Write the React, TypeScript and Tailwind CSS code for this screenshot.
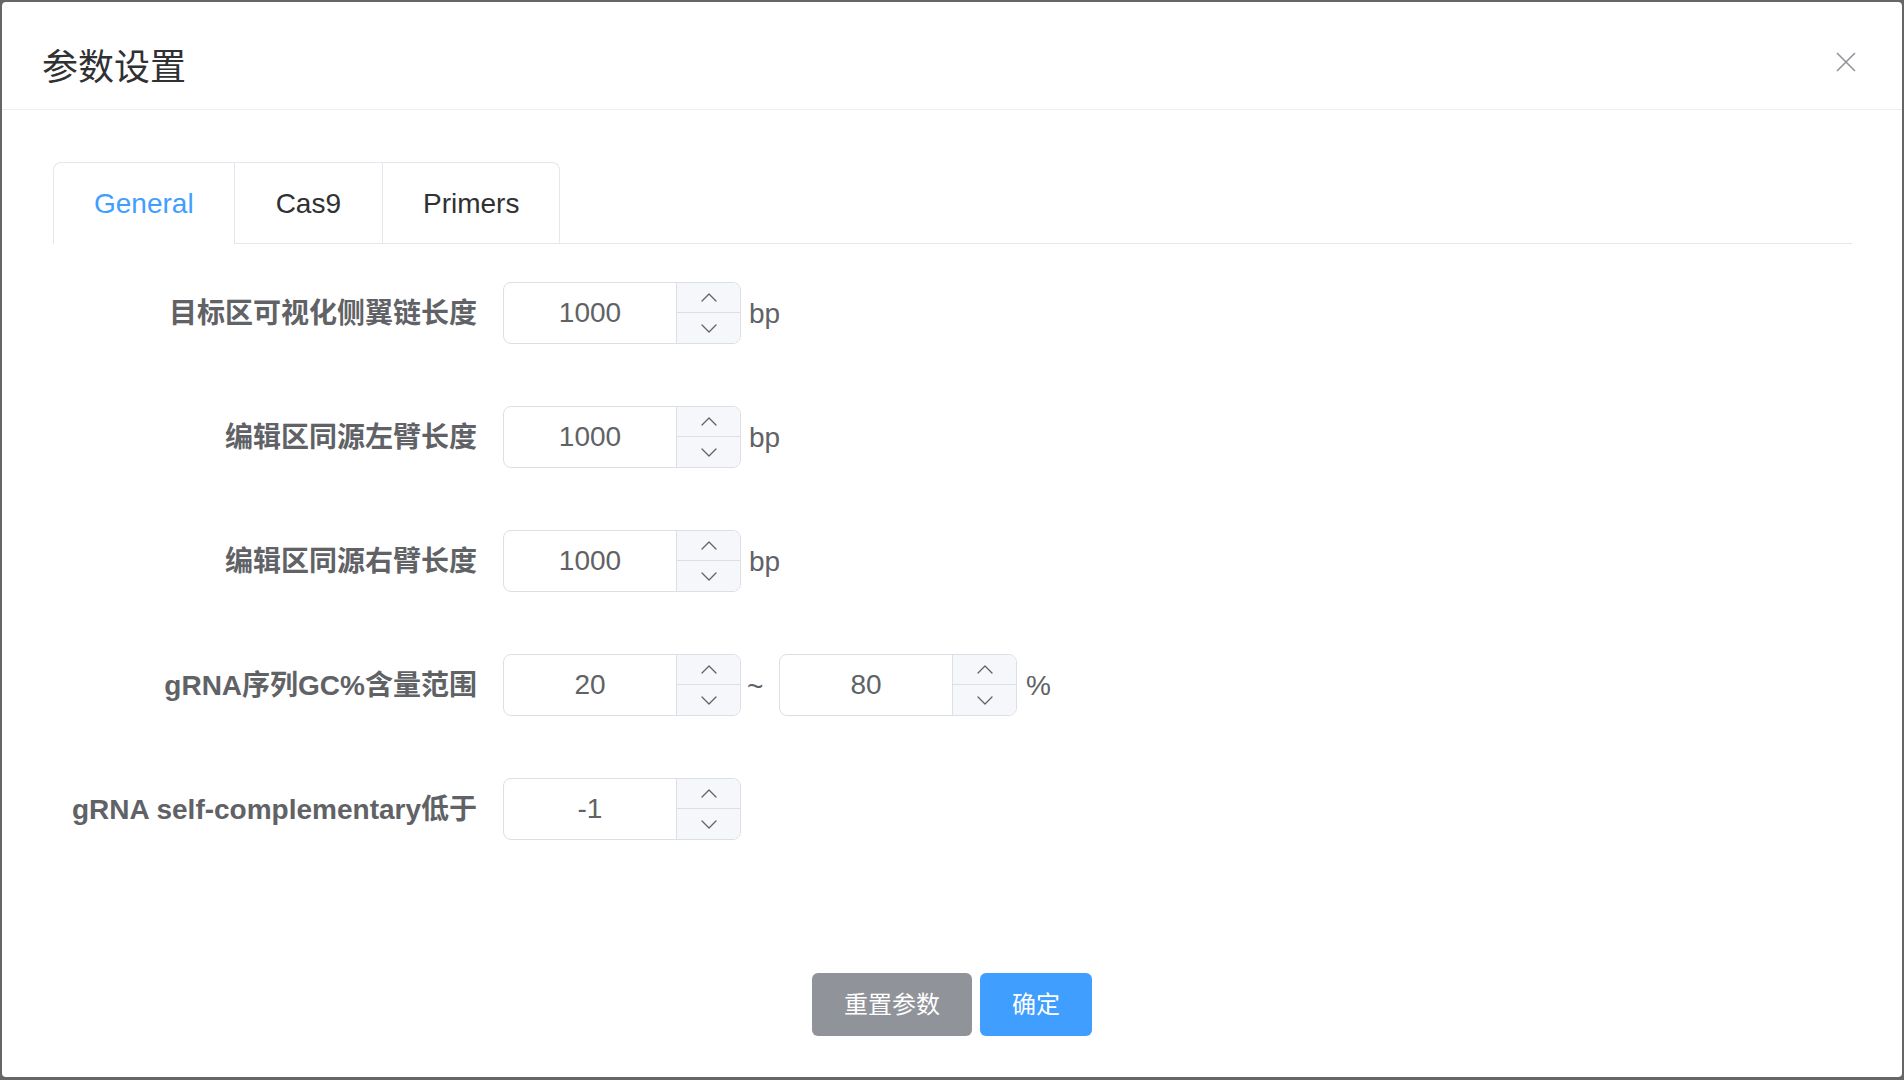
import { useState } from 'react';

const FONT = { fontFamily: '"Liberation Sans", "Noto Sans CJK SC", sans-serif' };

function Chevron({ up }: { up?: boolean }) {
  return (
    <svg width="16" height="9" viewBox="0 0 16 9" fill="none">
      <polyline
        points={up ? '1,8 8,1 15,8' : '1,1 8,8 15,1'}
        stroke="#606266"
        strokeWidth="1.3"
        strokeLinecap="round"
        strokeLinejoin="round"
      />
    </svg>
  );
}

function NumberInput({ value }: { value: string }) {
  return (
    <div className="flex w-[238px] h-[62px] border border-[#dcdfe6] rounded-[8px] bg-white overflow-hidden">
      <div className="flex-1 flex items-center justify-center text-[28px] text-[#606266]">{value}</div>
      <div className="w-[64px] flex flex-col border-l border-[#dcdfe6] bg-[#f5f7fa]">
        <div className="h-[30px] flex items-center justify-center border-b border-[#dcdfe6]">
          <Chevron up />
        </div>
        <div className="flex-1 flex items-center justify-center">
          <Chevron />
        </div>
      </div>
    </div>
  );
}

function Row({ label, children }: { label: string; children: React.ReactNode }) {
  return (
    <div className="flex items-center h-[62px]">
      <div className="w-[450px] pr-[26px] pt-[2px] text-right text-[28px] font-bold text-[#606266] whitespace-nowrap">
        {label}
      </div>
      {children}
    </div>
  );
}

const Unit = ({ children }: { children: React.ReactNode }) => (
  <span className="ml-[8px] pt-[2px] text-[28px] text-[#606266]">{children}</span>
);

const tabs = [
  { name: 'General', pad: 'px-10' },
  { name: 'Cas9', pad: 'px-[41px]' },
  { name: 'Primers', pad: 'px-10' },
];

export default function App() {
  const [tab, setTab] = useState('General');

  return (
    <div className="w-[1904px] h-[1080px] overflow-hidden bg-[#666666] pt-[2px] pl-[2px]" style={FONT}>
      <div className="relative w-[1900px] h-[1075px] bg-white rounded-[4px] flex flex-col">
        <div className="h-[108px] border-b border-[#ebeef5] pt-[42px] pl-[40px]">
          <h1 className="text-[36px] leading-[48px] text-[#303133]">参数设置</h1>
        </div>
        <button className="absolute right-[46px] top-[50px] w-[20px] h-[20px]">
          <svg width="20" height="20" viewBox="0 0 20 20">
            <path d="M1 1 L19 19 M19 1 L1 19" stroke="#909399" strokeWidth="1.6" />
          </svg>
        </button>

        <div className="pt-[52px] pl-[51px] pr-[50px]">
          <div className="flex">
            <div className="flex border-t border-l border-r border-[#e4e7ed] rounded-t-[8px]">
              {tabs.map((t, i) => (
                <div
                  key={t.name}
                  onClick={() => setTab(t.name)}
                  className={`h-[81px] ${t.pad} pt-[2px] flex items-center text-[28px] cursor-pointer border-b ${
                    i > 0 ? 'border-l border-l-[#e4e7ed]' : ''
                  } ${tab === t.name ? 'text-[#409eff] border-b-white' : 'text-[#303133] border-b-[#e4e7ed]'}`}
                >
                  {t.name}
                </div>
              ))}
            </div>
            <div className="flex-1 border-b border-[#e4e7ed]" />
          </div>

          <div className="mt-[38px] flex flex-col gap-[62px]">
            <Row label="目标区可视化侧翼链长度">
              <NumberInput value="1000" />
              <Unit>bp</Unit>
            </Row>
            <Row label="编辑区同源左臂长度">
              <NumberInput value="1000" />
              <Unit>bp</Unit>
            </Row>
            <Row label="编辑区同源右臂长度">
              <NumberInput value="1000" />
              <Unit>bp</Unit>
            </Row>
            <Row label="gRNA序列GC%含量范围">
              <NumberInput value="20" />
              <span className="w-[38px] pl-[6px] pt-[4px] text-[28px] text-[#606266]">~</span>
              <NumberInput value="80" />
              <span className="ml-[9px] pt-[2px] text-[28px] text-[#606266]">%</span>
            </Row>
            <Row label="gRNA self-complementary低于">
              <NumberInput value="-1" />
            </Row>
          </div>
        </div>

        <div className="mt-auto pb-[41px] flex justify-center gap-[8px]">
          <button className="h-[63px] px-[32px] rounded-[6px] bg-[#909399] text-white text-[24px]">重置参数</button>
          <button className="h-[63px] px-[32px] rounded-[6px] bg-[#409eff] text-white text-[24px]">确定</button>
        </div>
      </div>
    </div>
  );
}
